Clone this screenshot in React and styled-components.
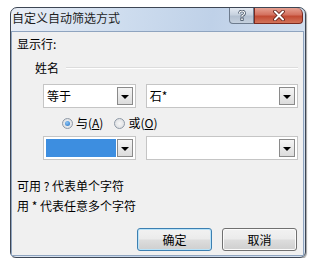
import React from "react";
import styled, { createGlobalStyle } from "styled-components";

const Global = createGlobalStyle`
  html, body {
    margin: 0;
    background: #ffffff;
  }
  body {
    font-family: "Noto Sans CJK SC", "Noto Sans", sans-serif;
    font-size: 12px;
    color: #000;
  }
`;

const Frame = styled.div`
  position: relative;
  box-sizing: border-box;
  margin: 7px 0 0 10px;
  width: 296px;
  height: 251px;
  border: 1px solid #3d4654;
  border-radius: 7px 7px 6px 6px;
  background: linear-gradient(100deg, #e9eef6 0%, #cddcee 35%, #bfd1e8 60%, #d9e4f1 100%);
  box-shadow: 1px 1px 1px rgba(0, 0, 0, 0.35);
  display: flex;
  flex-direction: column;
  padding: 0 1px 1px 0;
`;

const TitleBar = styled.div`
  height: 23px;
  display: flex;
  align-items: flex-start;
`;

const Title = styled.div`
  padding: 2px 0 0 1px;
  font-size: 12px;
  line-height: 16px;
  color: #1e1e1e;
  flex: 1;
`;

const CaptionBtn = styled.div`
  box-sizing: border-box;
  height: 16px;
  width: ${(p) => p.$w}px;
  border: 1px solid ${(p) => (p.$close ? "#7a2a20" : "#6d7b8d")};
  border-top: none;
  border-radius: ${(p) => (p.$close ? "0 6px 4px 0" : "0 0 0 4px")};
  background: ${(p) =>
    p.$close
      ? "linear-gradient(#e6a091 0%, #d4715f 45%, #c24a33 55%, #d2735a 100%)"
      : "linear-gradient(#e3e9f1 0%, #c7d2df 45%, #b3c0d0 55%, #c5d1de 100%)"};
  display: flex;
  align-items: center;
  justify-content: center;
  margin-right: ${(p) => (p.$close ? "1px" : "0")};
`;

const Client = styled.div`
  flex: 1;
  box-sizing: border-box;
  background: #f0f0f0;
  border: 1px solid #8fa4bf;
  display: flex;
  flex-direction: column;
  padding: 3px 5px 0 5px;
`;

const Text = styled.div`
  line-height: 16px;
  font-size: 12px;
  margin-top: ${(p) => p.$mt || 0}px;
  white-space: pre;
`;

const GroupHead = styled.div`
  display: flex;
  align-items: center;
  margin: 8px 0 0 18px;
  line-height: 16px;
`;

const GroupLine = styled.div`
  flex: 1;
  height: 1px;
  background: #dcdcdc;
  border-bottom: 1px solid #ffffff;
  margin-left: 7px;
`;

const Row = styled.div`
  display: flex;
  gap: 10px;
  margin: ${(p) => p.$mt}px 0 0 26px;
`;

const Combo = styled.div`
  box-sizing: border-box;
  width: ${(p) => p.$w}px;
  height: 24px;
  background: #ffffff;
  border: 1px solid #c5c5c5;
  display: flex;
  align-items: center;
  padding: 2px;
  gap: 1px;
`;

const Field = styled.div`
  flex: 1;
  align-self: stretch;
  background: ${(p) => (p.$selected ? "#3d8ee0" : "transparent")};
  line-height: 18px;
  padding-left: 1px;
  font-size: 12px;
`;

const DropBtn = styled.div`
  box-sizing: border-box;
  width: 16px;
  height: 18px;
  border: 1px solid #8a8a8a;
  background: linear-gradient(#f4f4f4, #dcdcdc);
  display: flex;
  align-items: center;
  justify-content: center;
`;

const Arrow = styled.div`
  width: 0;
  height: 0;
  border-left: 4px solid transparent;
  border-right: 4px solid transparent;
  border-top: 4px solid #000;
  margin-top: 1px;
`;

const RadioRow = styled.div`
  display: flex;
  align-items: center;
  margin: 7px 0 0 45px;
  line-height: 16px;
`;

const RadioItem = styled.label`
  display: flex;
  align-items: center;
  gap: 3px;
  margin-right: ${(p) => p.$mr || 0}px;
`;

const RadioDot = styled.span`
  box-sizing: border-box;
  width: 11px;
  height: 11px;
  border-radius: 50%;
  border: 1px solid #8e99a6;
  background: radial-gradient(circle, #f6f6f6 0%, #d6d9dd 100%);
  display: flex;
  align-items: center;
  justify-content: center;
  &::after {
    content: "";
    display: ${(p) => (p.$on ? "block" : "none")};
    width: 5px;
    height: 5px;
    border-radius: 50%;
    background: radial-gradient(circle at 40% 35%, #8fc6f5, #1f6fc4);
  }
`;

const U = styled.span`
  text-decoration: underline;
`;

const Buttons = styled.div`
  display: flex;
  justify-content: flex-end;
  gap: 10px;
  margin: 14px 1px 0 0;
`;

const Button = styled.div`
  box-sizing: border-box;
  width: 75px;
  height: 23px;
  border: 1px solid ${(p) => (p.$default ? "#3c7fb1" : "#707070")};
  border-radius: 3px;
  background: linear-gradient(#f2f2f2 0%, #ebebeb 48%, #dddddd 52%, #cfcfcf 100%);
  box-shadow: inset 0 0 0 1px ${(p) => (p.$default ? "#b9e3f9" : "#fbfbfb")};
  display: flex;
  align-items: center;
  justify-content: center;
  font-size: 12px;
`;

const ComboBox = ({ w, text, selected }) => (
  <Combo $w={w}>
    <Field $selected={selected}>{text}</Field>
    <DropBtn>
      <Arrow />
    </DropBtn>
  </Combo>
);

export default function App() {
  return (
    <>
      <Global />
      <Frame>
        <TitleBar>
          <Title>自定义自动筛选方式</Title>
          <CaptionBtn $w={25}>
            <svg width="10" height="11" viewBox="0 0 10 11">
              <path d="M2.5 3.5 Q2.5 1 5 1 Q7.5 1 7.5 3.3 Q7.5 5 5 5.8 L5 7.2" fill="none" stroke="#3b4a5c" strokeWidth="2.6" />
              <path d="M2.5 3.5 Q2.5 1 5 1 Q7.5 1 7.5 3.3 Q7.5 5 5 5.8 L5 7.2" fill="none" stroke="#ffffff" strokeWidth="1.2" />
              <rect x="3.8" y="8" width="2.4" height="2.4" fill="#ffffff" stroke="#3b4a5c" strokeWidth="0.8" />
            </svg>
          </CaptionBtn>
          <CaptionBtn $w={49} $close>
            <svg width="14" height="11" viewBox="0 0 14 11">
              <path d="M3 1.5 L11 9.5 M11 1.5 L3 9.5" stroke="#5a1a12" strokeWidth="3.6" strokeLinecap="round" />
              <path d="M3 1.5 L11 9.5 M11 1.5 L3 9.5" stroke="#ffffff" strokeWidth="2" strokeLinecap="round" />
            </svg>
          </CaptionBtn>
        </TitleBar>
        <Client>
          <Text $mt={1}>显示行:</Text>
          <GroupHead>
            姓名
            <GroupLine />
          </GroupHead>
          <Row $mt={8}>
            <ComboBox w={93} text="等于" />
            <ComboBox w={153} text="石*" />
          </Row>
          <RadioRow>
            <RadioItem $mr={11}>
              <RadioDot $on />
              <span>
                与(<U>A</U>)
              </span>
            </RadioItem>
            <RadioItem>
              <RadioDot />
              <span>
                或(<U>O</U>)
              </span>
            </RadioItem>
          </RadioRow>
          <Row $mt={5}>
            <ComboBox w={93} text="" selected />
            <ComboBox w={153} text="" />
          </Row>
          <Text $mt={18}>可用 ? 代表单个字符</Text>
          <Text $mt={4}>用 * 代表任意多个字符</Text>
          <Buttons>
            <Button $default>确定</Button>
            <Button>取消</Button>
          </Buttons>
        </Client>
      </Frame>
    </>
  );
}
